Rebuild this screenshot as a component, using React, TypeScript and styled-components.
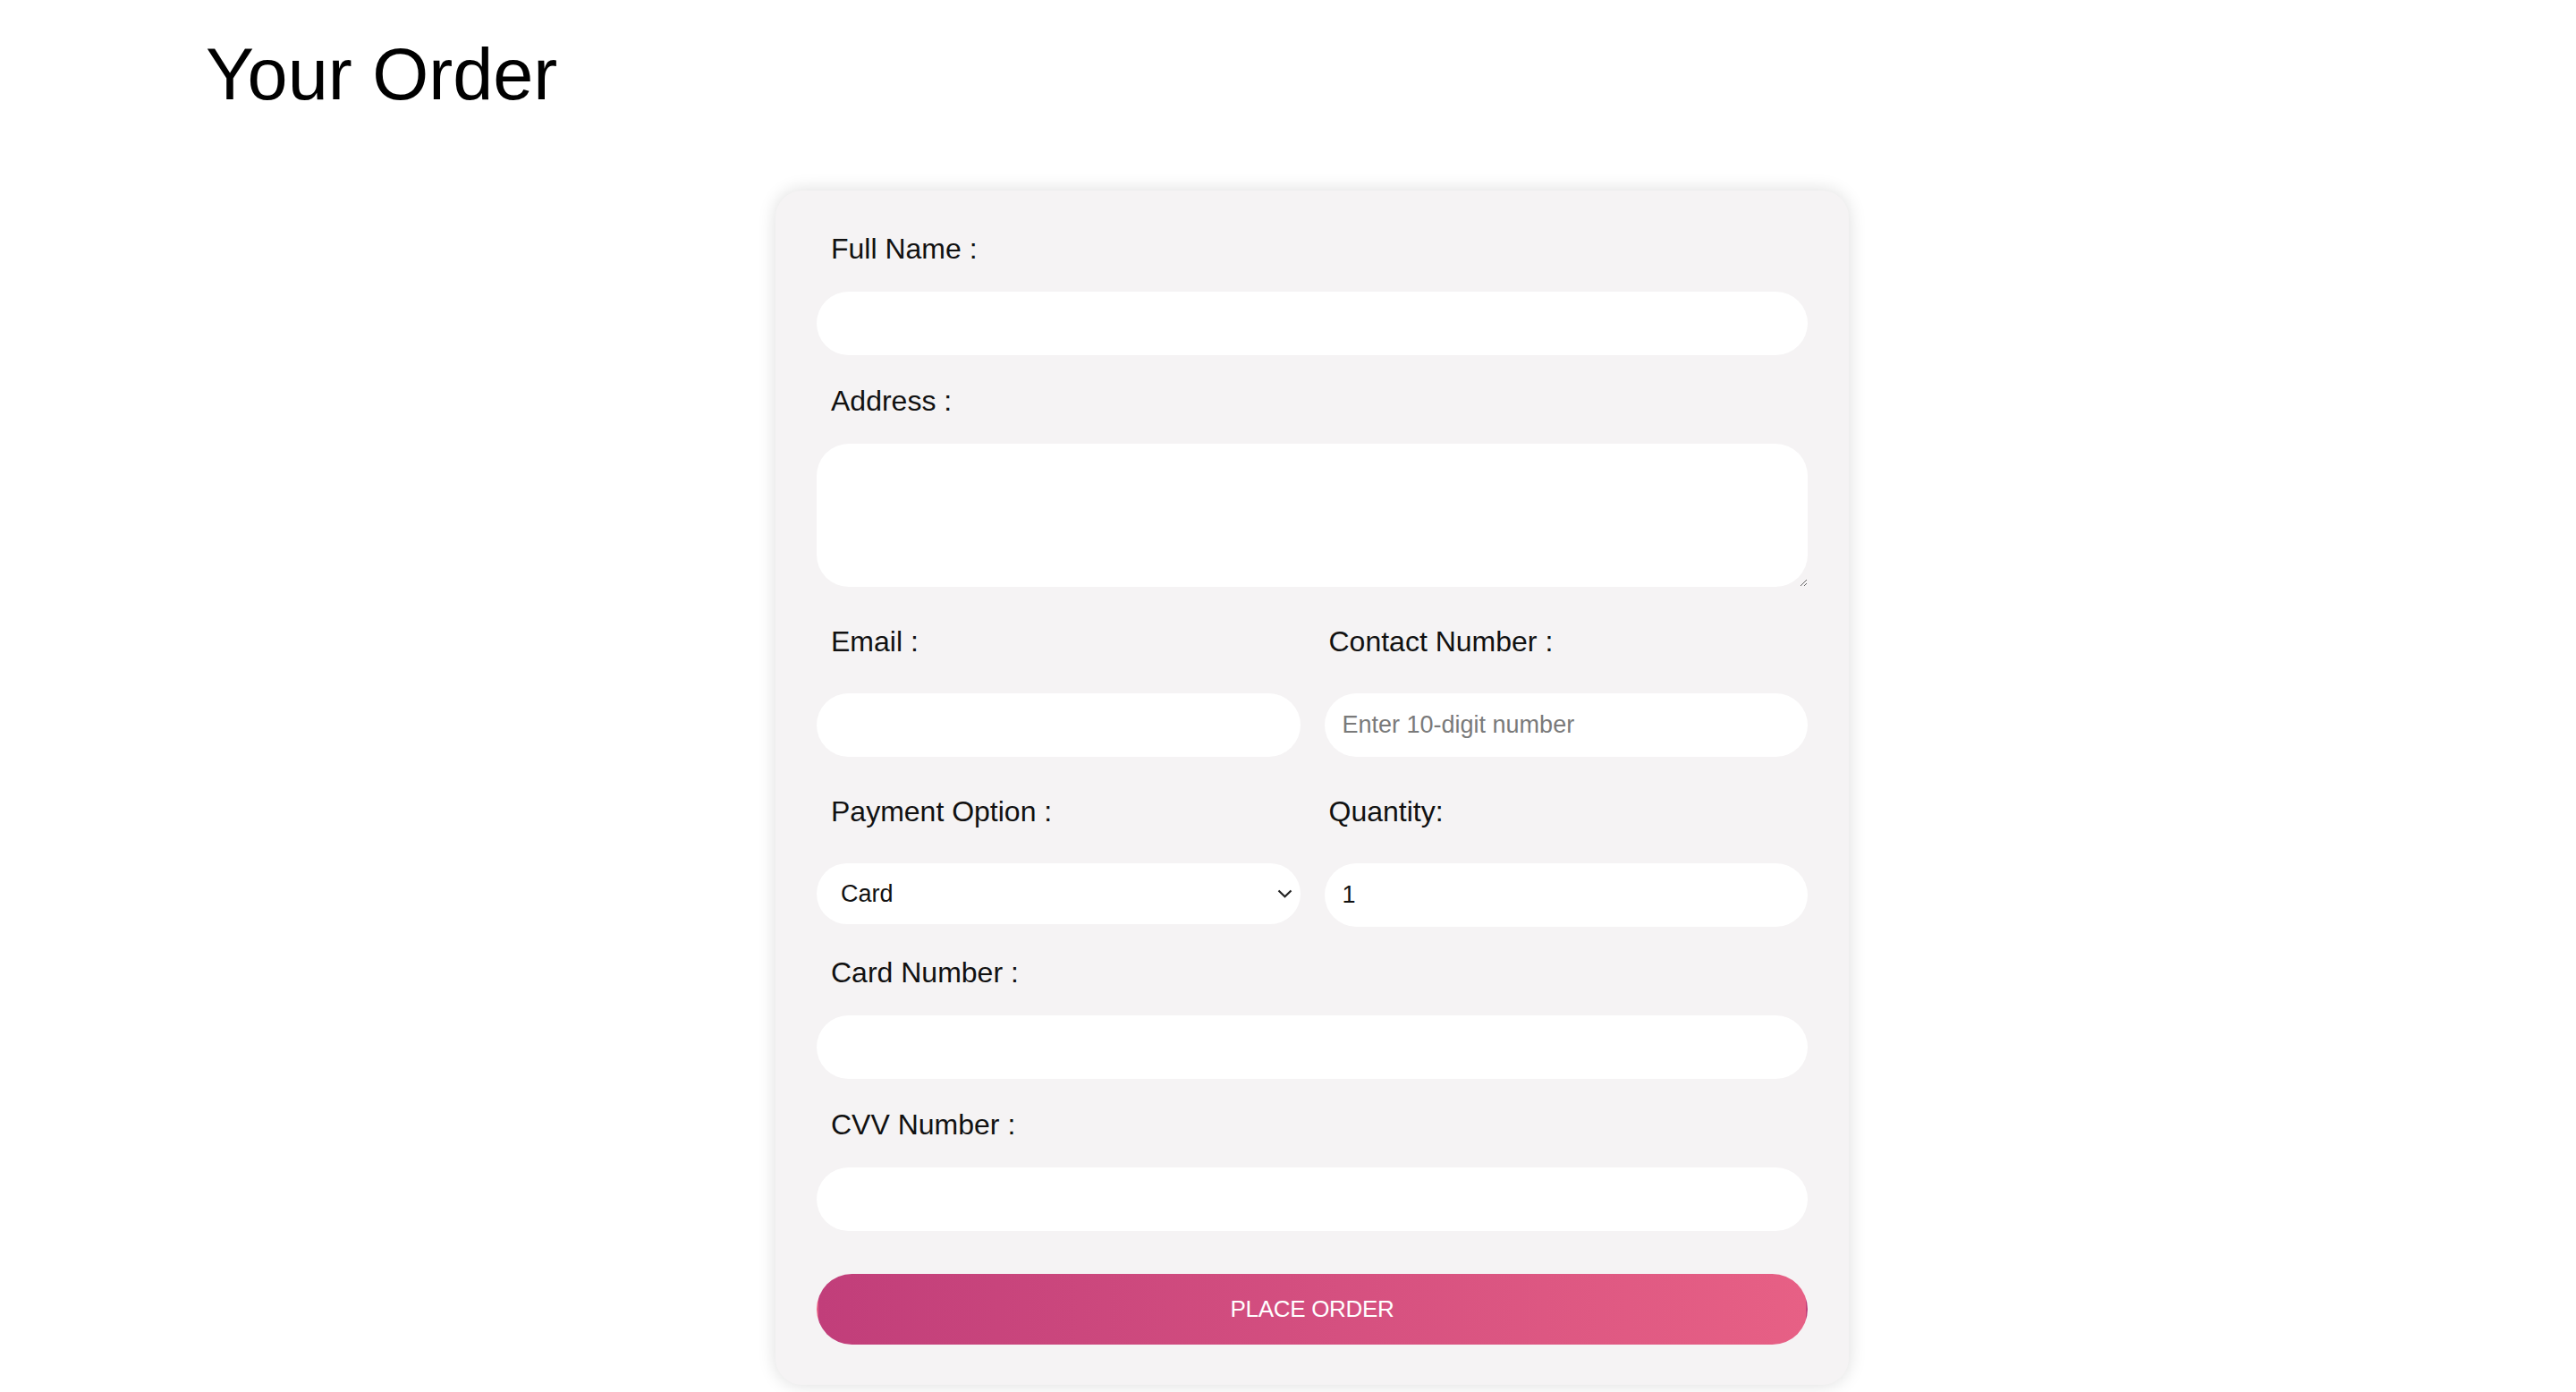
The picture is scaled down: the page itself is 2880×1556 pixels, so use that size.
import React, { useState } from 'react';
import styled, { createGlobalStyle } from 'styled-components';

const GlobalStyle = createGlobalStyle`
  html, body {
    margin: 0;
    padding: 0;
    background: #ffffff;
    font-family: 'Liberation Sans', Arial, Helvetica, sans-serif;
  }
  * {
    box-sizing: border-box;
  }
`;

const Page = styled.div`
  min-height: 1556px;
  padding: 37px 0 0;
`;

const Title = styled.h1`
  margin: 0 0 0 230px;
  font-size: 81px;
  line-height: 92px;
  font-weight: 400;
  color: #000;
`;

const Main = styled.main`
  display: flex;
  justify-content: center;
  padding-left: 54px;
  margin-top: 84px;
`;

const Card = styled.form`
  width: 1200px;
  background: #f5f3f4;
  border-radius: 30px;
  box-shadow: 0 0 20px rgba(0, 0, 0, 0.14);
  padding: 47px 46px 45px;
  display: flex;
  flex-direction: column;
`;

const Field = styled.div<{ $gap?: number }>`
  display: flex;
  flex-direction: column;
  margin-bottom: ${({ $gap }) => ($gap ?? 33)}px;
`;

const Label = styled.label<{ $indent?: number; $space?: number }>`
  display: block;
  font-size: 32px;
  line-height: 37px;
  color: #111;
  padding-left: ${({ $indent }) => ($indent ?? 16)}px;
  margin-bottom: ${({ $space }) => ($space ?? 29)}px;
`;

const Input = styled.input`
  width: 100%;
  height: 71px;
  border: none;
  outline: none;
  border-radius: 36px;
  background: #fff;
  padding: 0 20px;
  font-family: 'Liberation Sans', Arial, sans-serif;
  font-size: 27px;
  color: #111;

  &::placeholder {
    color: #7a7a7a;
  }
`;

const TextArea = styled.textarea`
  width: 100%;
  height: 160px;
  border: none;
  outline: none;
  border-radius: 36px;
  background: #fff;
  padding: 20px;
  font-family: 'Liberation Sans', Arial, sans-serif;
  font-size: 27px;
  resize: vertical;
  display: block;
`;

const Row = styled.div<{ $gap: number }>`
  display: grid;
  grid-template-columns: 1fr 1fr;
  column-gap: 27px;
  align-items: start;
  margin-bottom: ${({ $gap }) => $gap}px;
`;

const Column = styled.div`
  display: flex;
  flex-direction: column;
`;

const SelectWrap = styled.div`
  position: relative;
  height: 68px;
`;

const Select = styled.select`
  width: 100%;
  height: 68px;
  appearance: none;
  -webkit-appearance: none;
  border: none;
  outline: none;
  border-radius: 34px;
  background: #fff;
  padding: 0 50px 0 27px;
  font-family: 'Liberation Sans', Arial, sans-serif;
  font-size: 27px;
  color: #111;
`;

const Chevron = styled.svg`
  position: absolute;
  right: 9px;
  top: 29px;
  width: 17px;
  height: 10px;
  pointer-events: none;
`;

const SubmitButton = styled.button`
  height: 79px;
  width: 100%;
  border: 2px solid transparent;
  border-radius: 40px;
  background: linear-gradient(to right, #c13e7a, #e76085);
  color: #fff;
  font-family: 'Liberation Sans', Arial, sans-serif;
  font-size: 26px;
  letter-spacing: -0.3px;
  cursor: pointer;
`;

export default function App() {
  const [payment, setPayment] = useState('Card');
  const [quantity, setQuantity] = useState('1');

  return (
    <Page>
      <GlobalStyle />
      <Title>Your Order</Title>
      <Main>
        <Card onSubmit={(e) => e.preventDefault()}>
          <Field>
            <Label>Full Name :</Label>
            <Input type="text" />
          </Field>

          <Field $gap={43}>
            <Label>Address :</Label>
            <TextArea />
          </Field>

          <Row $gap={43}>
            <Column>
              <Label $space={39}>Email :</Label>
              <Input type="email" />
            </Column>
            <Column>
              <Label $indent={5} $space={39}>Contact Number :</Label>
              <Input type="tel" placeholder="Enter 10-digit number" />
            </Column>
          </Row>

          <Row $gap={33}>
            <Column>
              <Label $space={39}>Payment Option :</Label>
              <SelectWrap>
                <Select value={payment} onChange={(e) => setPayment(e.target.value)}>
                  <option>Card</option>
                  <option>Cash on Delivery</option>
                  <option>UPI</option>
                </Select>
                <Chevron viewBox="0 0 17 10">
                  <path d="M1.5 1.5 L8.5 8.2 L15.5 1.5" fill="none" stroke="#222" strokeWidth="2.2" />
                </Chevron>
              </SelectWrap>
            </Column>
            <Column>
              <Label $indent={5} $space={39}>Quantity:</Label>
              <Input type="number" value={quantity} onChange={(e) => setQuantity(e.target.value)} />
            </Column>
          </Row>

          <Field>
            <Label>Card Number :</Label>
            <Input type="text" />
          </Field>

          <Field $gap={48}>
            <Label>CVV Number :</Label>
            <Input type="text" />
          </Field>

          <SubmitButton type="submit">PLACE ORDER</SubmitButton>
        </Card>
      </Main>
    </Page>
  );
}
